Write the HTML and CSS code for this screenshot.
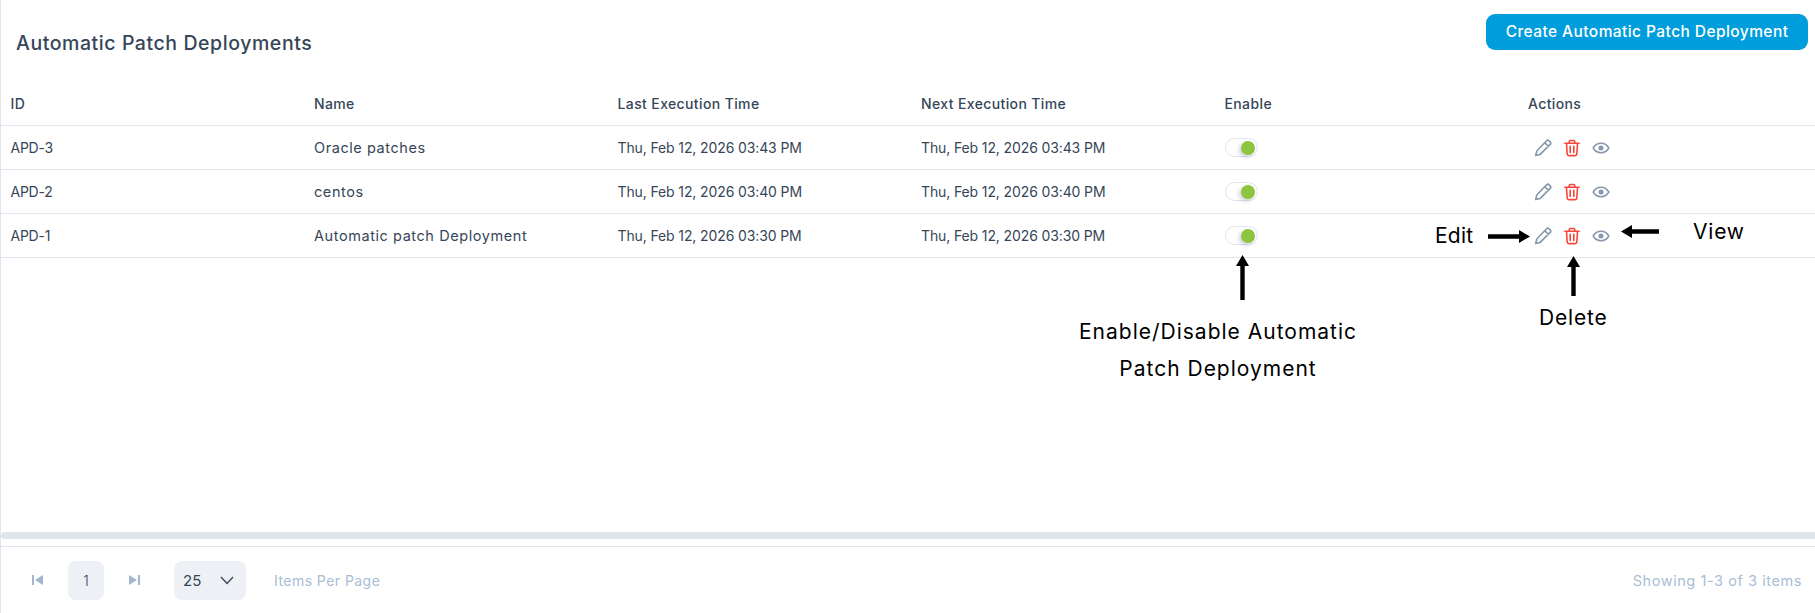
FILE: index.html
```html
<!DOCTYPE html>
<html lang="en">
<head>
<meta charset="utf-8">
<title>Automatic Patch Deployments</title>
<link rel="stylesheet" href="styles.css">
</head>
<body>
<svg class="defs" width="0" height="0" aria-hidden="true">
  <symbol id="i-edit" viewBox="0 0 18 18"><path d="M12.600 1.800a1.800 1.800 0 0 1 2.500 0l1.100 1.100a1.800 1.800 0 0 1 0 2.500L6.200 15.400l-4.500 1.100 1.100-4.500zM10.800 3.700l3.700 3.700" fill="none" stroke="#8497ac" stroke-width="1.600" stroke-linejoin="round"/></symbol>
  <symbol id="i-trash" viewBox="0 0 18 18"><path d="M1.800 4.200h14.400M6.200 4V2.800a1.300 1.300 0 0 1 1.300-1.300h3a1.300 1.300 0 0 1 1.300 1.300V4M3.500 4.400l.7 10.800a1.600 1.600 0 0 0 1.600 1.400h6.400a1.600 1.600 0 0 0 1.600-1.400l.7-10.800M7.200 7.400v6M10.800 7.400v6" fill="none" stroke="#f5473c" stroke-width="1.600" stroke-linecap="round" stroke-linejoin="round"/></symbol>
  <symbol id="i-eye" viewBox="0 0 18 18"><path d="M1.200 9C3 5.900 5.800 4.300 9 4.300S15 5.900 16.800 9C15 12.100 12.200 13.700 9 13.700S3 12.100 1.200 9z" fill="none" stroke="#8497ac" stroke-width="1.500"/><circle cx="9" cy="9" r="2.500" fill="#8497ac"/></symbol>
</svg>
<main class="page">
  <header class="top">
    <h1 class="title">Automatic Patch Deployments</h1>
    <button class="create" type="button">Create Automatic Patch Deployment</button>
  </header>

  <section class="table">
    <div class="row head">
      <div>ID</div><div>Name</div><div>Last Execution Time</div><div>Next Execution Time</div><div>Enable</div><div>Actions</div>
    </div>
    <div class="row">
      <div class="id">APD-3</div><div class="name">Oracle patches</div><div class="date">Thu, Feb 12, 2026 03:43 PM</div><div class="date">Thu, Feb 12, 2026 03:43 PM</div>
      <div><span class="toggle"><span class="knob"></span></span></div>
      <div class="actions"><svg class="ico"><use href="#i-edit"/></svg><svg class="ico"><use href="#i-trash"/></svg><svg class="ico"><use href="#i-eye"/></svg></div>
    </div>
    <div class="row">
      <div class="id">APD-2</div><div class="name">centos</div><div class="date">Thu, Feb 12, 2026 03:40 PM</div><div class="date">Thu, Feb 12, 2026 03:40 PM</div>
      <div><span class="toggle"><span class="knob"></span></span></div>
      <div class="actions"><svg class="ico"><use href="#i-edit"/></svg><svg class="ico"><use href="#i-trash"/></svg><svg class="ico"><use href="#i-eye"/></svg></div>
    </div>
    <div class="row">
      <div class="id">APD-1</div><div class="name">Automatic patch Deployment</div><div class="date">Thu, Feb 12, 2026 03:30 PM</div><div class="date">Thu, Feb 12, 2026 03:30 PM</div>
      <div><span class="toggle"><span class="knob"></span></span></div>
      <div class="actions"><svg class="ico"><use href="#i-edit"/></svg><svg class="ico"><use href="#i-trash"/></svg><svg class="ico"><use href="#i-eye"/></svg></div>
    </div>
  </section>

  <div class="scrollbar"></div>

  <footer class="pager">
    <svg class="nav" viewBox="0 0 11 12"><path d="M0 1h2v10H0zM11 1v10L3 6z" fill="#a4b6cd"/></svg>
    <span class="page-num">1</span>
    <svg class="nav" viewBox="0 0 11 12"><path d="M9 1h2v10H9zM0 1v10l8-5z" fill="#a4b6cd"/></svg>
    <span class="size">25<svg class="chev" viewBox="0 0 14 9"><path d="M1 1l6 6.500L13 1" fill="none" stroke="#364658" stroke-width="1.300"/></svg></span>
    <span class="per">Items Per Page</span>
    <span class="count">Showing 1-3 of 3 items</span>
  </footer>

  <div class="note n-edit">Edit</div>
  <div class="note n-view">View</div>
  <div class="note n-delete">Delete</div>
  <div class="note n-enable">Enable/Disable Automatic<br>Patch Deployment</div>
  <svg class="arrow a-edit" viewBox="0 0 42 13"><path d="M0 4.300h31V0l11 6.500-11 6.500V8.700H0z" fill="#000"/></svg>
  <svg class="arrow a-view" viewBox="0 0 38 13"><path d="M38 4.300H11V0L0 6.500 11 13V8.700h27z" fill="#000"/></svg>
  <svg class="arrow a-delete" viewBox="0 0 13 40"><path d="M4.300 40V11H0L6.500 0 13 11H8.700v29z" fill="#000"/></svg>
  <svg class="arrow a-enable" viewBox="0 0 13 45"><path d="M4.300 45V11H0L6.500 0 13 11H8.700v34z" fill="#000"/></svg>
</main>
</body>
</html>
```
FILE: styles.css
```css
* { box-sizing: border-box; }
html, body { margin: 0; padding: 0; background: #fff; overflow: hidden; }
body { font-family: Inter, "Noto Sans", sans-serif; color: #364658; }
.defs { position: absolute; }
.page {
  position: relative;
  width: 1815px;
  height: 613px;
  border-left: 1px solid #dfe6f0;
  display: flex;
  flex-direction: column;
}
.top {
  height: 82px;
  padding: 14px 7px 0 15px;
  display: flex;
  justify-content: space-between;
  align-items: flex-start;
}
.title {
  margin: 14px 0 0;
  font-size: 19.500px;
  line-height: 30px;
  font-weight: 500;
  letter-spacing: 0.570px;
}
.create {
  width: 322px;
  height: 36px;
  border: 0;
  border-radius: 9px;
  background: #009ddc;
  color: #fff;
  font: 500 15.500px/36px Inter, sans-serif;
  letter-spacing: 0.430px;
  padding: 0;
}
.table { display: flex; flex-direction: column; }
.row {
  display: grid;
  grid-template-columns: repeat(6, 303.500px);
  height: 44px;
  align-items: center;
  padding-left: 9.500px;
  border-bottom: 1px solid #e1e6ef;
  font-size: 14px;
  letter-spacing: 0.150px;
}
.head { font-weight: 500; letter-spacing: 0.380px; }
.id { letter-spacing: -0.250px; }
.name { font-size: 14.500px; letter-spacing: 0.570px; }
.date { letter-spacing: -0.120px; }
.toggle {
  display: block;
  position: relative;
  width: 33px;
  height: 19px;
  border: 1px solid #e0e6ee;
  border-radius: 10px;
  background: #fff;
}
.knob {
  position: absolute;
  right: 2px;
  top: 1.500px;
  width: 14px;
  height: 14px;
  border-radius: 50%;
  background: #8cc63f;
  box-shadow: -2px 2px 4px rgba(90, 100, 120, .3);
}
.actions { display: flex; gap: 11px; padding-left: 6px; align-items: center; }
.ico { width: 18px; height: 18px; }
.scrollbar {
  margin-top: 274px;
  height: 7px;
  background: #dee5ec;
  border-radius: 4px 0 0 4px;
}
.pager {
  margin-top: 7px;
  flex: 1;
  border-top: 1px solid #dfe6f0;
  display: flex;
  align-items: center;
  padding: 0 13px 0 31px;
  font-size: 14px;
  letter-spacing: 0.150px;
}
.nav { width: 11px; height: 12px; }
.page-num {
  width: 36px;
  height: 39px;
  margin: 0 25px;
  border-radius: 8px;
  background: #edf0f5;
  display: flex;
  align-items: center;
  justify-content: center;
  font-weight: 300;
}
.size {
  width: 72px;
  height: 39px;
  margin-left: 34px;
  padding: 0 12px 0 9px;
  border-radius: 8px;
  background: #edf0f5;
  display: flex;
  align-items: center;
  justify-content: space-between;
  font-size: 15px;
}
.chev { width: 14px; height: 9px; }
.per { margin-left: 28px; color: #a9bdd6; letter-spacing: 0.450px; }
.count { margin-left: auto; color: #a9bdd6; font-size: 14.500px; letter-spacing: 0.570px; }

.note { position: absolute; color: #000; font-size: 21px; line-height: 37px; font-weight: 400; letter-spacing: 0.800px; white-space: nowrap; }
.n-edit { left: 1434px; top: 217px; letter-spacing: 0.200px; }
.n-view { left: 1692px; top: 213px; }
.n-delete { left: 1538px; top: 299px; }
.n-enable { left: 1052px; top: 313px; width: 330px; text-align: center; letter-spacing: 1px; }
.arrow { position: absolute; }
.a-edit { left: 1487px; top: 230px; width: 42px; height: 13px; }
.a-view { left: 1620px; top: 225px; width: 38px; height: 13px; }
.a-delete { left: 1566px; top: 256px; width: 13px; height: 40px; }
.a-enable { left: 1235px; top: 255px; width: 13px; height: 45px; }
```
